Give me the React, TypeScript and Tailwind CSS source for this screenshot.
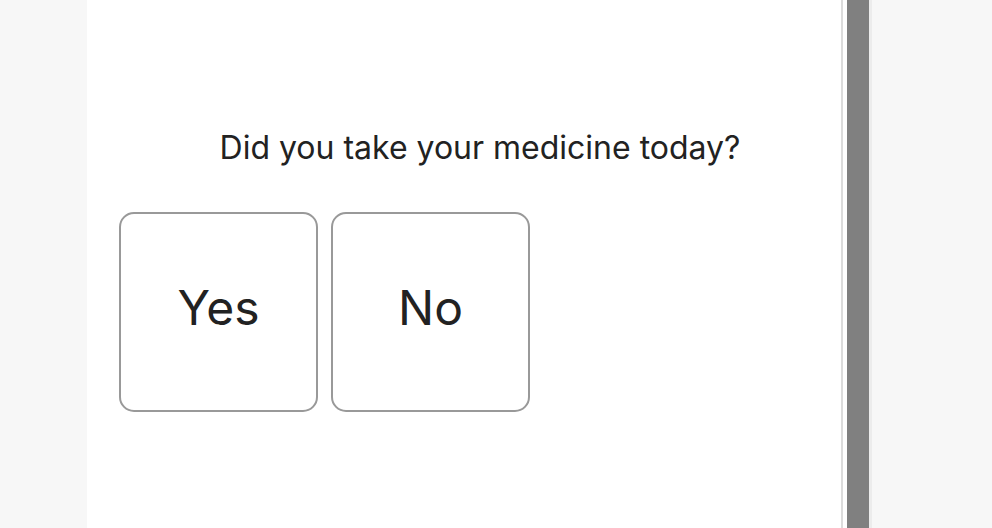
export default function App() {
  return (
    <div className="flex h-[528px] w-[992px] overflow-hidden bg-[#f7f7f7] font-['Inter',sans-serif]">
      <div className="w-[87px] shrink-0" />
      <main className="flex w-[754px] shrink-0 flex-col bg-white pl-[32px] pt-[126px]">
        <h1 className="text-center text-[32px] leading-[44px] text-[#222]">
          Did you take your medicine today?
        </h1>
        <div className="mt-[42px] flex gap-[13px]">
          {['Yes', 'No'].map((label) => (
            <button
              key={label}
              className="flex h-[200px] w-[199px] items-center justify-center rounded-[15px] border-2 border-[#999] bg-white pb-[8px] text-[48px] text-[#222]"
            >
              {label}
            </button>
          ))}
        </div>
      </main>
      <div className="w-[2px] shrink-0 bg-[#dcdcdc]" />
      <div className="w-[4px] shrink-0 bg-white" />
      <div className="w-[22px] shrink-0 bg-[#808080]" />
      <div className="w-[3px] shrink-0 bg-[#ececec]" />
    </div>
  );
}
